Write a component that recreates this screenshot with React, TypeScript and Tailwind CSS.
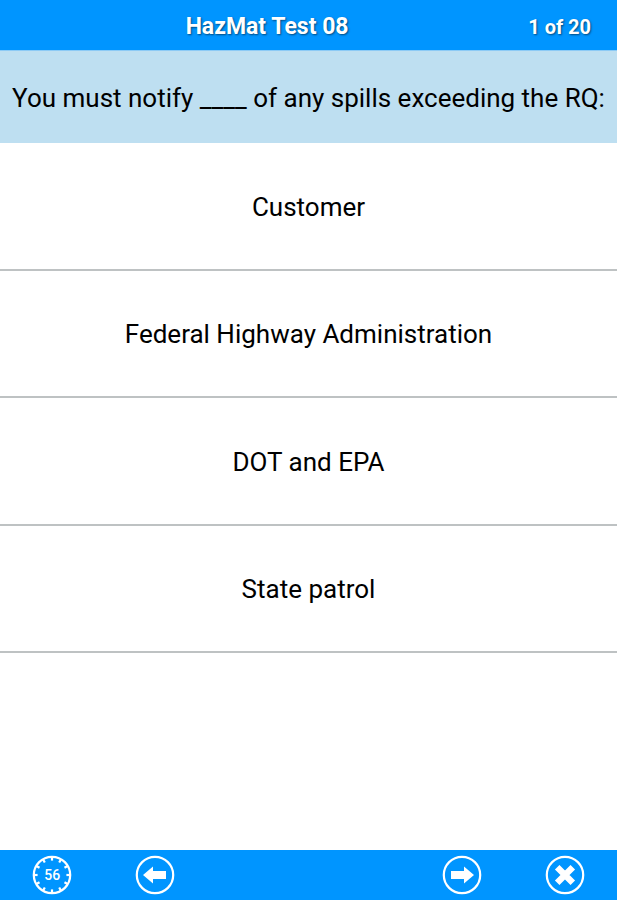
import React, { useState } from "react";

const answers = [
  "Customer",
  "Federal Highway Administration",
  "DOT and EPA",
  "State patrol",
];

const ticks = [0, 30, 60, 90, 120, 150, 180, 210, 240, 270, 300, 330];

interface RoundIconProps {
  children: React.ReactNode;
}

function RoundIcon({ children }: RoundIconProps) {
  return (
    <svg viewBox="0 0 40 40" className="w-10 h-10" aria-hidden="true">
      <circle cx="20" cy="20" r="18.2" fill="none" stroke="white" strokeWidth="2.2" />
      {children}
    </svg>
  );
}

function Timer({ seconds }: { seconds: number }) {
  return (
    <div className="relative w-10 h-10" role="timer">
      <RoundIcon>
        {ticks.map((angle) => (
          <path
            key={angle}
            d="M20 2v3.6"
            stroke="white"
            strokeWidth="2.2"
            transform={`rotate(${angle} 20 20)`}
          />
        ))}
      </RoundIcon>
      <span className="absolute inset-0 flex items-center justify-center text-[14px] leading-none font-medium text-white">
        {seconds}
      </span>
    </div>
  );
}

export default function App() {
  const [selected, setSelected] = useState<string | null>(null);

  return (
    <div className="min-h-screen flex flex-col bg-white font-[Roboto,sans-serif] text-black">
      <header className="flex items-center h-[50px] pt-[3px] pl-8 pr-[26px] gap-[26px] bg-[#0095ff] text-white font-bold text-shadow-[1px_1px_2px_rgb(0_0_0/0.5)]">
        <h1 className="flex-1 text-center text-[23px] leading-7">HazMat Test 08</h1>
        <span className="text-[20px] leading-7">1 of 20</span>
      </header>

      <main className="flex-1">
        <p className="flex items-center justify-center min-h-[93px] pt-0.5 border-t border-[#8ccaf5] bg-[#bedff1] text-center text-[26px] leading-8">
          You must notify ____ of any spills exceeding the RQ:
        </p>
        <div className="grid auto-rows-fr h-[510px]">
          {answers.map((answer) => (
            <button
              key={answer}
              type="button"
              aria-pressed={selected === answer}
              onClick={() => setSelected(answer)}
              className="pt-0.5 border-b-2 border-[#bec2c3] text-center text-[26px] leading-8 aria-pressed:bg-[#bedff1]"
            >
              {answer}
            </button>
          ))}
        </div>
      </main>

      <footer className="grid grid-cols-6 items-center justify-items-center h-[50px] px-px bg-[#0095ff]">
        <Timer seconds={56} />
        <button type="button" aria-label="Previous question">
          <RoundIcon>
            <path d="M8 20l10-8.5v4.5H31v8H18v4.5z" fill="white" />
          </RoundIcon>
        </button>
        <button type="button" aria-label="Next question" className="col-start-5">
          <RoundIcon>
            <path d="M32 20l-10-8.5v4.5H9v8h13v4.5z" fill="white" />
          </RoundIcon>
        </button>
        <button type="button" aria-label="Close test">
          <RoundIcon>
            <path d="M12.2 12.2l15.6 15.6M27.8 12.2L12.2 27.8" stroke="white" strokeWidth="6.4" />
          </RoundIcon>
        </button>
      </footer>
    </div>
  );
}
